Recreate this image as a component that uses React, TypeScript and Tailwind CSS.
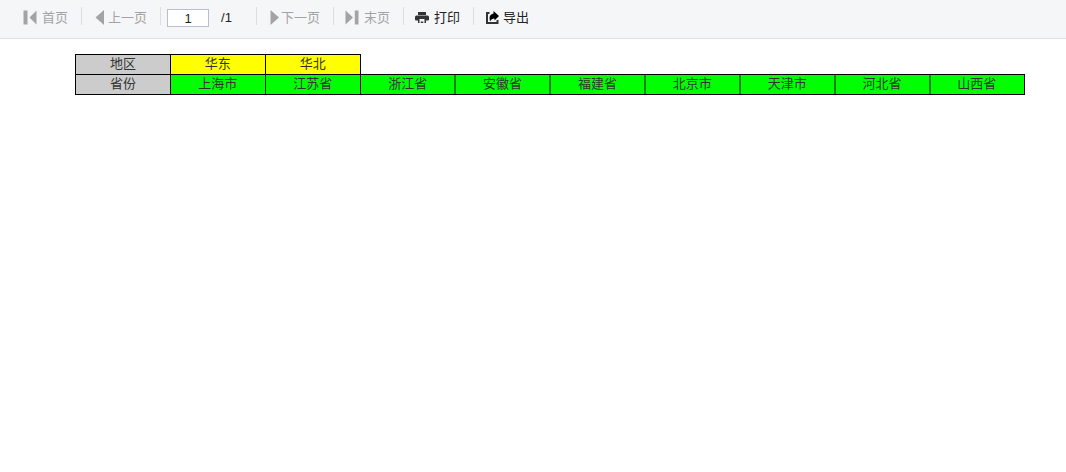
import { ReactNode, useState } from "react";

const regioes = ["华东", "华北"];
const provincias = ["上海市", "江苏省", "浙江省", "安徽省", "福建省", "北京市", "天津市", "河北省", "山西省"];

function bordaProvincia(index: number): string {
  if (index < 2) return "border-x";
  if (index === 2) return "border-l shadow-[inset_-1px_0_#008000]";
  if (index === provincias.length - 1) return "border-r shadow-[inset_1px_0_#008000]";
  return "shadow-[inset_1px_0_#008000,inset_-1px_0_#008000]";
}

function Separator() {
  return <div className="h-[18px] w-px shrink-0 bg-[#dcdee0]" />;
}

interface ToolButtonProps {
  label: string;
  icon: ReactNode;
  disabled?: boolean;
  className?: string;
}

function ToolButton({ label, icon, disabled, className = "gap-[5px] pl-[11px]" }: ToolButtonProps) {
  return (
    <button
      type="button"
      disabled={disabled}
      className={`flex h-[22px] shrink-0 items-center pr-[13px] text-[#222] disabled:text-[#a3a3a3] ${className}`}
    >
      {icon}
      <span className="leading-5">{label}</span>
    </button>
  );
}

const firstIcon = (
  <svg width="14" height="16" viewBox="0 0 14 16" fill="currentColor" aria-hidden="true">
    <path d="M.5 .5h4v14h-4zM13.500 .5v14L6.500 7.500z" />
  </svg>
);

const prevIcon = (
  <svg width="9" height="16" viewBox="0 0 9 16" fill="currentColor" aria-hidden="true">
    <path d="M9 0v15L.5 7.500z" />
  </svg>
);

const nextIcon = (
  <svg width="9" height="16" viewBox="0 0 9 16" fill="currentColor" aria-hidden="true">
    <path d="M.5 0v15L9 7.500z" />
  </svg>
);

const lastIcon = (
  <svg width="14" height="16" viewBox="0 0 14 16" fill="currentColor" aria-hidden="true">
    <path d="M.5 .5v14L8 7.500zM9.800 .5h3.700v14H9.800z" />
  </svg>
);

const printIcon = (
  <svg width="14" height="12" viewBox="0 0 14 12" fill="#333" aria-hidden="true">
    <path d="M3 0h8v3H3z" />
    <path d="M1.500 3.500h11q1.500 0 1.500 1.500v2.500q0 1-1 1h-2V7H3v1.500H1q-1 0-1-1V5q0-1.500 1.500-1.500z" />
    <path d="M3 7h1.500v4H3zM9.500 7H11v4H9.500zM5.800 9.500h2.400V11H5.800z" />
  </svg>
);

const exportIcon = (
  <svg width="13" height="14" viewBox="0 0 13 14" fill="none" aria-hidden="true">
    <path d="M3.500 2H1v10h10.500V9" stroke="#333" strokeWidth="2" />
    <path d="M7.500 0 13 5 8.500 9.500V7.500Q5.500 7.500 4 10.500 2 3.500 7.500 2.500z" fill="#000" />
  </svg>
);

export default function App() {
  const [pagina, setPagina] = useState("1");

  return (
    <div className="min-h-screen bg-white font-['Liberation_Sans','Noto_Sans_CJK_SC',sans-serif] text-[13px] text-[#333]">
      <header className="flex items-start overflow-hidden border-b border-[#dedfe1] bg-[#f5f6f8] pt-[7px] pb-[9px] pl-3">
        <ToolButton label="首页" icon={firstIcon} disabled />
        <Separator />
        <ToolButton label="上一页" icon={prevIcon} disabled className="gap-1 pl-[13px]" />
        <Separator />
        <label className="flex h-[22px] shrink-0 items-center pr-6 pl-1.5 text-[#222]">
          <input
            aria-label="页码"
            className="h-[18px] w-[42px] border border-[#b9bdcf] bg-white text-center text-[13px] leading-4 outline-none"
            value={pagina}
            onChange={(e) => setPagina(e.target.value.replace(/\D/g, ""))}
          />
          <span className="pl-3 leading-4">/1</span>
        </label>
        <Separator />
        <ToolButton label="下一页" icon={nextIcon} disabled className="gap-0.5 pl-[13px]" />
        <Separator />
        <ToolButton label="末页" icon={lastIcon} disabled />
        <Separator />
        <ToolButton label="打印" icon={printIcon} />
        <Separator />
        <ToolButton label="导出" icon={exportIcon} className="gap-1 pl-3" />
      </header>

      <main className="pt-[15px] pr-[41px] pl-[75px]">
        <table className="w-full table-fixed border-collapse text-center leading-[17px]">
          <tbody>
            <tr className="h-5 align-top">
              <th scope="row" className="border border-black bg-[#ccc] p-0 font-normal">地区</th>
              {regioes.map((regiao) => (
                <td key={regiao} className="border border-black bg-[#ffff00] p-0">{regiao}</td>
              ))}
            </tr>
            <tr className="h-5 align-top">
              <th scope="row" className="border border-black bg-[#ccc] p-0 font-normal">省份</th>
              {provincias.map((provincia, index) => (
                <td key={provincia} className={`border-y border-black bg-[#00ff00] p-0 ${bordaProvincia(index)}`}>
                  {provincia}
                </td>
              ))}
            </tr>
          </tbody>
        </table>
      </main>
    </div>
  );
}
